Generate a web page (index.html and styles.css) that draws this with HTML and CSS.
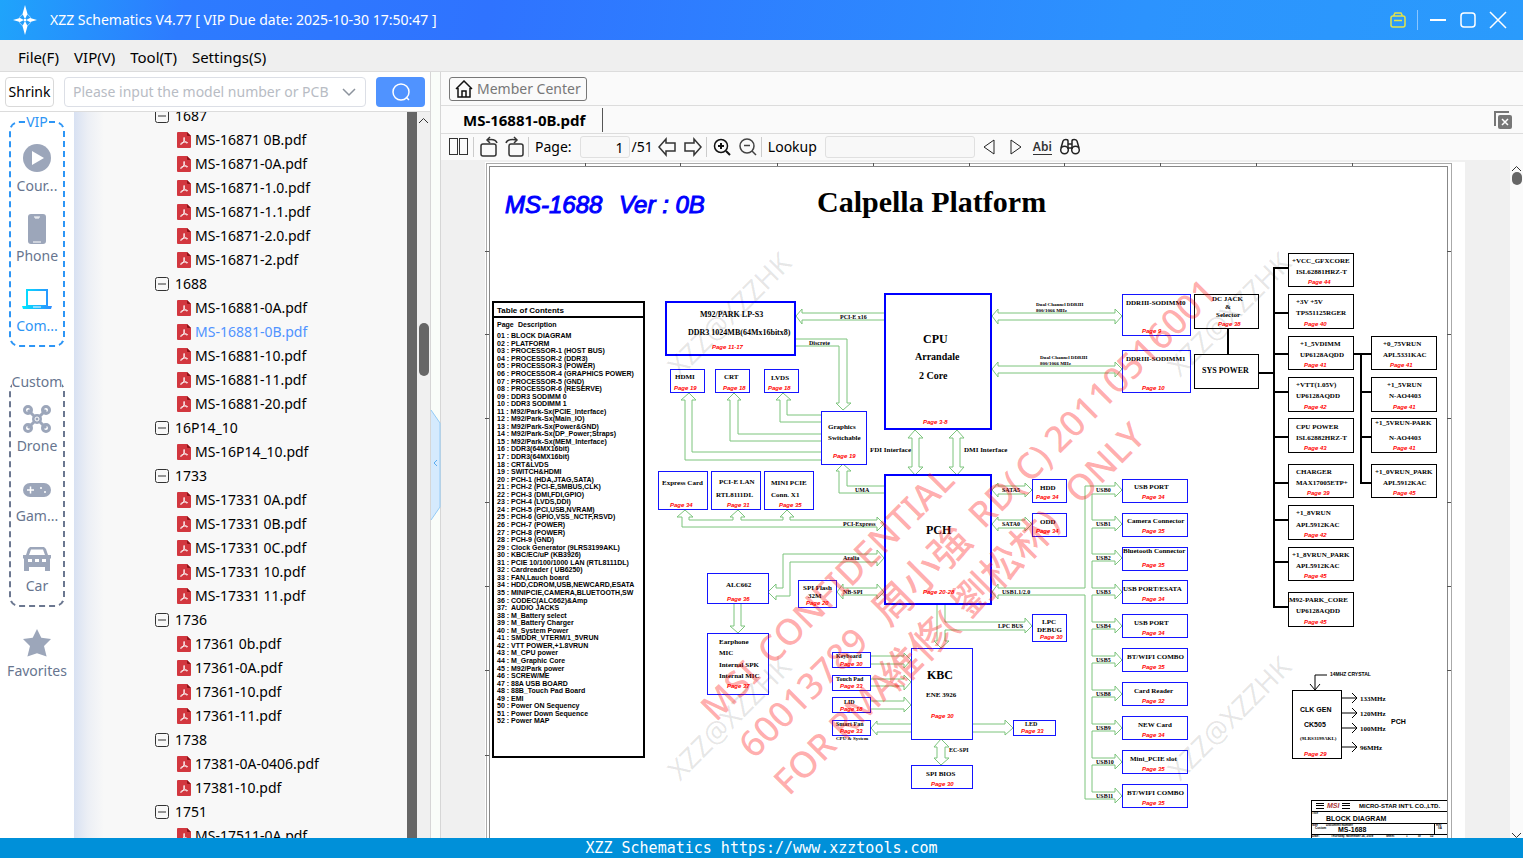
FILE: index.html
```html
<!DOCTYPE html>
<html lang="en">
<head>
    <meta charset="UTF-8">
    <meta name="viewport" content="width=device-width, initial-scale=1.0">
    <title>XZZ Schematics V4.77</title>
    <link rel="stylesheet" href="styles.css">
</head>
<body>

    <!-- shared icons -->
    <svg class="sprite" aria-hidden="true">
        <symbol id="pdf" viewBox="0 0 14 16">
            <path d="M1 0h9l4 4v11a1 1 0 0 1-1 1H1a1 1 0 0 1-1-1V1a1 1 0 0 1 1-1z" fill="#d2373f"/>
            <path d="M10 0l4 4h-3a1 1 0 0 1-1-1z" fill="#8f1218"/>
            <path d="M7 5.500c.8 0 .3 2.500-.6 4.200C5.600 11.300 4 13 3.600 12.300c-.4-.9 2.700-2.300 5-2.300 1.600 0 2.200.6 1.700 1-.8.500-4.200-2.500-3.300-5.500z" fill="none" stroke="#fff" stroke-width="1"/>
        </symbol>
        <symbol id="minus" viewBox="0 0 14 14">
            <rect x="0.500" y="0.500" width="13" height="13" rx="2" fill="none" stroke="#333"/>
            <path d="M3 7h8" stroke="#333"/>
        </symbol>
    </svg>

    <div class="app">
        <header class="titlebar">
            <svg class="logo" viewBox="0 0 24 30">
                <circle cx="12" cy="15" r="6" fill="none" stroke="#9fd4ff" stroke-width="1"/>
                <path d="M12 0l2.500 9-2 4h-1l-2-4zM12 30l2.500-9-2-4h-1l-2 4zM0 15l7-2 3 1.500v1L7 17zM24 15l-7-2-3 1.500v1l3 1.500z" fill="#fff"/>
                <circle cx="12" cy="15" r="1.500" fill="#fff"/>
            </svg>
            <span class="title">XZZ Schematics V4.77 [ VIP Due date: 2025-10-30 17:50:47 ]</span>
            <div class="window-buttons">
                <button class="icon-btn" aria-label="Toolbox"><svg width="16" height="16" viewBox="0 0 16 16" fill="none" stroke="#e3e34a" stroke-width="1.500"><rect x="1" y="4" width="14" height="11" rx="2"/><path d="M4 4V3l1-2h6l1 2v1M4 8.500h8"/></svg></button>
                <span class="title-sep"></span>
                <button class="icon-btn" aria-label="Minimize"><svg width="16" height="16" viewBox="0 0 16 16" stroke="#fff" stroke-width="2"><path d="M0 8h16"/></svg></button>
                <button class="icon-btn" aria-label="Maximize"><svg width="16" height="16" viewBox="0 0 16 16" fill="none" stroke="#fff" stroke-width="1.500"><rect x="1" y="1" width="14" height="14" rx="3"/></svg></button>
                <button class="icon-btn" aria-label="Close"><svg width="16" height="16" viewBox="0 0 16 16" stroke="#fff" stroke-width="1.500"><path d="M0 0l16 16M16 0L0 16"/></svg></button>
            </div>
        </header>

        <nav class="menubar">
            <a href="#">File(F)</a>
            <a href="#">VIP(V)</a>
            <a href="#">Tool(T)</a>
            <a href="#">Settings(S)</a>
        </nav>

        <div class="workspace">
            <aside class="side">
                <form class="search-row">
                    <button type="button" class="shrink">Shrink</button>
                    <div class="combo">
                        <input type="text" aria-label="Model number or PCB" placeholder="Please input the model number or PCB">
                        <button type="button" class="icon-btn" aria-label="Show history"><svg width="14" height="8" viewBox="0 0 14 8" fill="none" stroke="#8c939d" stroke-width="1.500"><path d="M1 1l6 6 6-6"/></svg></button>
                    </div>
                    <button type="button" class="search-btn" aria-label="Search"><svg width="20" height="20" viewBox="0 0 20 20" fill="none" stroke="#fff" stroke-width="1.500"><circle cx="10" cy="10" r="8"/><path d="M15 15l3 3"/></svg></button>
                </form>

                <div class="side-body">
                    <div class="rail">
                        <fieldset class="rail-group vip">
                            <legend>VIP</legend>
                            <button class="rail-item"><svg viewBox="0 0 28 28"><circle cx="14" cy="14" r="14"/><path d="M9 7l12 7-12 7z" fill="#fff"/></svg>Cour...</button>
                            <button class="rail-item"><svg viewBox="0 0 28 28"><rect x="5" y="0" width="18" height="30" rx="3"/><path d="M11 3h6M12 4h4M10 28h8" stroke="#fff" stroke-width="1"/></svg>Phone</button>
                            <button class="rail-item active"><svg viewBox="0 0 28 28"><defs><linearGradient id="lap"><stop offset="0" stop-color="#00e8ff"/><stop offset="1" stop-color="#2f8bff"/></linearGradient></defs><path fill="url(#lap)" fill-rule="evenodd" d="M3 5h22v17h4l-1 3H0l-1-3h4zM5 7v14h18V7z"/><path d="M10 23h8" stroke="#fff" stroke-width="1"/></svg>Com...</button>
                        </fieldset>
                        <fieldset class="rail-group">
                            <legend>Custom</legend>
                            <button class="rail-item"><svg viewBox="0 0 28 28"><g fill="none" stroke="#9ca6ba" stroke-width="3"><circle cx="5" cy="6" r="3.500"/><circle cx="23" cy="6" r="3.500"/><circle cx="5" cy="24" r="3.500"/><circle cx="23" cy="24" r="3.500"/><path d="M5 6l18 18M23 6L5 24"/></g><circle cx="14" cy="15" r="5"/><circle cx="14" cy="15" r="2" fill="none" stroke="#fff"/></svg>Drone</button>
                            <button class="rail-item"><svg viewBox="0 0 28 28"><rect y="9" width="28" height="14" rx="7"/><path d="M4 16h7M7.500 12.500v7" stroke="#fff" stroke-width="1.500"/><circle cx="18" cy="14" r="1" fill="#fff"/><circle cx="22" cy="18" r="1" fill="#fff"/></svg>Gam...</button>
                            <button class="rail-item"><svg viewBox="0 0 28 28"><path transform="translate(0 1)" fill-rule="evenodd" d="M7 2h14l2 2 2 6h3v3l-1 1v12h-5v-4H6v4H1V14l-1-1v-3h3l2-6zM8 4.500L6 10h16l-2-5.500zM5 14v3h4v-3zM12 14v3h4v-3zM19 14v3h4v-3z"/></svg>Car</button>
                        </fieldset>
                        <button class="rail-item favorites"><svg viewBox="0 0 28 28"><path d="M14 0l4.300 8.700 9.700 1.400-7 6.800 2.600 10.600-9.600-3.200-9.600 3.200L7 16.900l-7-6.800 9.700-1.400z"/></svg>Favorites</button>
                    </div>

                    <div class="tree-wrap">
                        <ul class="tree">
                            <li><button class="folder"><svg><use href="#minus"/></svg>1687</button>
                                <ul>
                                    <li><a href="#"><svg><use href="#pdf"/></svg>MS-16871 0B.pdf</a></li>
                                    <li><a href="#"><svg><use href="#pdf"/></svg>MS-16871-0A.pdf</a></li>
                                    <li><a href="#"><svg><use href="#pdf"/></svg>MS-16871-1.0.pdf</a></li>
                                    <li><a href="#"><svg><use href="#pdf"/></svg>MS-16871-1.1.pdf</a></li>
                                    <li><a href="#"><svg><use href="#pdf"/></svg>MS-16871-2.0.pdf</a></li>
                                    <li><a href="#"><svg><use href="#pdf"/></svg>MS-16871-2.pdf</a></li>
                                </ul>
                            </li>
                            <li><button class="folder"><svg><use href="#minus"/></svg>1688</button>
                                <ul>
                                    <li><a href="#"><svg><use href="#pdf"/></svg>MS-16881-0A.pdf</a></li>
                                    <li><a href="#" class="selected"><svg><use href="#pdf"/></svg>MS-16881-0B.pdf</a></li>
                                    <li><a href="#"><svg><use href="#pdf"/></svg>MS-16881-10.pdf</a></li>
                                    <li><a href="#"><svg><use href="#pdf"/></svg>MS-16881-11.pdf</a></li>
                                    <li><a href="#"><svg><use href="#pdf"/></svg>MS-16881-20.pdf</a></li>
                                </ul>
                            </li>
                            <li><button class="folder"><svg><use href="#minus"/></svg>16P14_10</button>
                                <ul>
                                    <li><a href="#"><svg><use href="#pdf"/></svg>MS-16P14_10.pdf</a></li>
                                </ul>
                            </li>
                            <li><button class="folder"><svg><use href="#minus"/></svg>1733</button>
                                <ul>
                                    <li><a href="#"><svg><use href="#pdf"/></svg>MS-17331 0A.pdf</a></li>
                                    <li><a href="#"><svg><use href="#pdf"/></svg>MS-17331 0B.pdf</a></li>
                                    <li><a href="#"><svg><use href="#pdf"/></svg>MS-17331 0C.pdf</a></li>
                                    <li><a href="#"><svg><use href="#pdf"/></svg>MS-17331 10.pdf</a></li>
                                    <li><a href="#"><svg><use href="#pdf"/></svg>MS-17331 11.pdf</a></li>
                                </ul>
                            </li>
                            <li><button class="folder"><svg><use href="#minus"/></svg>1736</button>
                                <ul>
                                    <li><a href="#"><svg><use href="#pdf"/></svg>17361 0b.pdf</a></li>
                                    <li><a href="#"><svg><use href="#pdf"/></svg>17361-0A.pdf</a></li>
                                    <li><a href="#"><svg><use href="#pdf"/></svg>17361-10.pdf</a></li>
                                    <li><a href="#"><svg><use href="#pdf"/></svg>17361-11.pdf</a></li>
                                </ul>
                            </li>
                            <li><button class="folder"><svg><use href="#minus"/></svg>1738</button>
                                <ul>
                                    <li><a href="#"><svg><use href="#pdf"/></svg>17381-0A-0406.pdf</a></li>
                                    <li><a href="#"><svg><use href="#pdf"/></svg>17381-10.pdf</a></li>
                                </ul>
                            </li>
                            <li><button class="folder"><svg><use href="#minus"/></svg>1751</button>
                                <ul>
                                    <li><a href="#"><svg><use href="#pdf"/></svg>MS-17511-0A.pdf</a></li>
                                </ul>
                            </li>
                        </ul>
                    </div>
                    <div class="scrollbar">
                        <svg width="9" height="6" viewBox="0 0 9 6" fill="none" stroke="#333"><path d="M0 5l4.500-4.500L9 5"/></svg>
                        <span class="thumb tree-thumb"></span>
                    </div>
                </div>
            </aside>

            <div class="splitter">
                <button class="icon-btn" aria-label="Collapse side panel"><svg width="10" height="110" viewBox="0 0 10 110"><path d="M0 0l9 13v84l-9 13" fill="#d5eafd" stroke="#93cbf6"/><path d="M6 50l-3 3 3 3" fill="none" stroke="#5cacf0"/></svg></button>
            </div>

            <main class="viewer">
                <div class="center-row">
                    <button class="member"><svg width="18" height="18" viewBox="0 0 18 18" fill="none" stroke="#111" stroke-width="1.500"><path d="M1 9l8-8 8 8M3 8v9h12V8"/><path d="M7 17v-6h4v6"/></svg>Member Center</button>
                </div>
                <div class="tab-row">
                    <a href="#" class="tab">MS-16881-0B.pdf</a>
                    <button class="icon-btn close-all" aria-label="Close all tabs"><svg width="18" height="18" viewBox="0 0 18 18"><path d="M1 15V1h14" fill="none" stroke="#777" stroke-width="2"/><rect x="4" y="4" width="14" height="14" rx="2" fill="#777"/><path d="M8 8l6 6M14 8l-6 6" stroke="#fff" stroke-width="1.500"/></svg></button>
                </div>
                <div class="toolbar">
                    <button class="icon-btn" aria-label="Two pages"><svg width="20" height="18" viewBox="0 0 20 18" fill="none" stroke="#333"><rect x="0.500" y="0.500" width="8" height="16"/><rect x="10.500" y="0.500" width="8" height="16"/></svg></button>
                    <span class="sep"></span>
                    <button class="icon-btn" aria-label="Rotate left"><svg width="18" height="20" viewBox="0 0 18 20" fill="none" stroke="#333" stroke-width="1.500"><rect x="1" y="7" width="15" height="12" rx="2"/><path d="M17 6c-1-3-5-4-10-3M10 0L7 3l3 3"/></svg></button>
                    <button class="icon-btn" aria-label="Rotate right"><svg width="18" height="20" viewBox="0 0 18 20" fill="none" stroke="#333" stroke-width="1.500"><rect x="3" y="7" width="14" height="12" rx="2"/><path d="M0 6c1-3 5-4 11-3M8 0l3 3-3 3"/></svg></button>
                    <span class="sep"></span>
                    <label for="page">Page:</label>
                    <input id="page" class="page-input" type="text" value="1">
                    <span class="page-total">/51</span>
                    <button class="icon-btn" aria-label="Previous page"><svg width="18" height="18" viewBox="0 0 18 18" fill="none" stroke="#333" stroke-width="1.500"><path d="M1 9l7-8v4h9v8H8v4z"/></svg></button>
                    <button class="icon-btn" aria-label="Next page"><svg width="18" height="18" viewBox="0 0 18 18" fill="none" stroke="#333" stroke-width="1.500"><path d="M17 9l-7-8v4H1v8h9v4z"/></svg></button>
                    <span class="sep"></span>
                    <button class="icon-btn" aria-label="Zoom in"><svg width="18" height="18" viewBox="0 0 18 18" fill="none" stroke="#111" stroke-width="2"><circle cx="8" cy="8" r="6.500" stroke-width="1.500"/><path d="M5 8h6M8 5v6M13 13l4 4"/></svg></button>
                    <button class="icon-btn" aria-label="Zoom out"><svg width="18" height="18" viewBox="0 0 18 18" fill="none" stroke="#444" stroke-width="1.500"><circle cx="8" cy="8" r="7"/><path d="M5 7.500h6M13 13l4 4"/></svg></button>
                    <span class="sep"></span>
                    <label for="lookup">Lookup</label>
                    <input id="lookup" class="lookup-input" type="text">
                    <button class="icon-btn" aria-label="Find previous"><svg width="12" height="16" viewBox="0 0 12 16" fill="none" stroke="#222" stroke-width="1"><path d="M11 1v14L1 8z"/></svg></button>
                    <button class="icon-btn next" aria-label="Find next"><svg width="12" height="16" viewBox="0 0 12 16" fill="none" stroke="#222" stroke-width="1"><path d="M1 1v14l10-7z"/></svg></button>
                    <button class="abi">Abi</button>
                    <button class="icon-btn" aria-label="Search in document"><svg width="20" height="16" viewBox="0 0 20 16" fill="none" stroke="#222" stroke-width="1.500"><circle cx="4.500" cy="11" r="3.800"/><circle cx="15.500" cy="11" r="3.800"/><path d="M1 9l2-7c1-2 5-2 5 0v8M19 9l-2-7c-1-2-5-2-5 0v8M8 5h4M8 9h4"/></svg></button>
                </div>

                <div class="doc">
                    <div class="sheet">
                        <svg class="page" viewBox="485 162 980 676">
                            <rect class="paper" x="485" y="162" width="980" height="676"/>

                            <!-- frame -->
                            <g class="frame">
                                <path d="M486 838V163H1451V838" stroke="#aaa"/>
                                <path d="M489 838V166H1447V838" stroke="#888"/>
                                <path d="M585 163v3M680 163v3M777 163v3M873 163v3M969 163v3M1064 163v3M1160 163v3M1256 163v3M1352 163v3M485 251h4M485 334h4M485 418h4M485 502h4M485 586h4M485 670h4M485 755h4M1447 251h4M1447 334h4M1447 418h4M1447 502h4M1447 586h4M1447 670h4" stroke="#555"/>
                            </g>

                            <text class="board" x="505" y="213">MS-1688</text>
                            <text class="board" x="619" y="213">Ver : 0B</text>
                            <text class="heading" x="817" y="212">Calpella Platform</text>

                            <!-- table of contents -->
                            <g class="toc">
                                <rect x="493" y="302" width="151" height="455"/>
                                <path d="M493 317h151"/>
                                <text class="toc-title" x="497" y="313">Table of Contents</text>
                                <text x="497" y="327">Page</text><text x="518" y="327">Description</text>
                                <text x="497" y="338">01 : BLOCK DIAGRAM</text>
                                <text x="497" y="346">02 : PLATFORM</text>
                                <text x="497" y="353">03 : PROCESSOR-1 (HOST BUS)</text>
                                <text x="497" y="361">04 : PROCESSOR-2 (DDR3)</text>
                                <text x="497" y="368">05 : PROCESSOR-3 (POWER)</text>
                                <text x="497" y="376">06 : PROCESSOR-4 (GRAPHICS POWER)</text>
                                <text x="497" y="384">07 : PROCESSOR-5 (GND)</text>
                                <text x="497" y="391">08 : PROCESSOR-6 (RESERVE)</text>
                                <text x="497" y="399">09 : DDR3 SODIMM 0</text>
                                <text x="497" y="406">10 : DDR3 SODIMM 1</text>
                                <text x="497" y="414">11 : M92/Park-Sx(PCIE_Interface)</text>
                                <text x="497" y="421">12 : M92/Park-Sx(Main_IO)</text>
                                <text x="497" y="429">13 : M92/Park-Sx(Power&amp;GND)</text>
                                <text x="497" y="436">14 : M92/Park-Sx(DP_Power;Straps)</text>
                                <text x="497" y="444">15 : M92/Park-Sx(MEM_Interface)</text>
                                <text x="497" y="451">16 : DDR3(64MX16bit)</text>
                                <text x="497" y="459">17 : DDR3(64MX16bit)</text>
                                <text x="497" y="467">18 : CRT&amp;LVDS</text>
                                <text x="497" y="474">19 : SWITCH&amp;HDMI</text>
                                <text x="497" y="482">20 : PCH-1 (HDA,JTAG,SATA)</text>
                                <text x="497" y="489">21 : PCH-2 (PCI-E,SMBUS,CLK)</text>
                                <text x="497" y="497">22 : PCH-3 (DMI,FDI,GPIO)</text>
                                <text x="497" y="504">23 : PCH-4 (LVDS,DDI)</text>
                                <text x="497" y="512">24 : PCH-5 (PCI,USB,NVRAM)</text>
                                <text x="497" y="519">25 : PCH-6 (GPIO,VSS_NCTF,RSVD)</text>
                                <text x="497" y="527">26 : PCH-7 (POWER)</text>
                                <text x="497" y="535">27 : PCH-8 (POWER)</text>
                                <text x="497" y="542">28 : PCH-9 (GND)</text>
                                <text x="497" y="550">29 : Clock Generator (9LRS3199AKL)</text>
                                <text x="497" y="557">30 : KBC/EC/uP (KB3926)</text>
                                <text x="497" y="565">31 : PCIE 10/100/1000 LAN (RTL8111DL)</text>
                                <text x="497" y="572">32 : Cardreader ( UB6250)</text>
                                <text x="497" y="580">33 : FAN,Lauch board</text>
                                <text x="497" y="587">34 : HDD,CDROM,USB,NEWCARD,ESATA</text>
                                <text x="497" y="595">35 : MINIPCIE,CAMERA,BLUETOOTH,SW</text>
                                <text x="497" y="603">36 : CODEC(ALC662)&amp;Amp</text>
                                <text x="497" y="610">37:</text><text x="511" y="610">AUDIO JACKS</text>
                                <text x="497" y="618">38 : M_Battery select</text>
                                <text x="497" y="625">39 : M_Battery Charger</text>
                                <text x="497" y="633">40 : M_System Power</text>
                                <text x="497" y="640">41 : SMDDR_VTERM/1_5VRUN</text>
                                <text x="497" y="648">42 : VTT POWER,+1.8VRUN</text>
                                <text x="497" y="655">43 : M_CPU power</text>
                                <text x="497" y="663">44 : M_Graphic Core</text>
                                <text x="497" y="671">45 : M92/Park power</text>
                                <text x="497" y="678">46 : SCREW/ME</text>
                                <text x="497" y="686">47 : 88A USB BOARD</text>
                                <text x="497" y="693">48 : 88B_Touch Pad Board</text>
                                <text x="497" y="701">49 : EMI</text>
                                <text x="497" y="708">50 : Power ON Sequency</text>
                                <text x="497" y="716">51 : Power Down Sequence</text>
                                <text x="497" y="723">52 : Power MAP</text>
                            </g>

                            <!-- bus arrows -->
                            <g class="bus">
                                <path d="M885 313H802V309L796 316L802 324V320H885"/>
                                <path d="M796 339H847V403H851L843 410L836 403H839V346H796"/>
                                <path d="M821 460H685V400H681L689 393L696 400H692V452H821"/>
                                <path d="M821 441H730V400H727L734 393L741 400H738V434H821"/>
                                <path d="M821 422H780V400H776L783 393L791 400H787V415H821"/>
                                <path d="M885 493H839V471H836L843 464L851 471H847V486H885"/>
                                <path d="M877 520H790V517H794L787 510L780 517H783V520H741V517H745L738 510L730 517H733V520H689V517H693L685 510L677 517H682V527H877V531L884 524L877 517Z"/>
                                <path d="M915 430L923 438H919V467H923L915 475L908 467H912V438H908Z"/>
                                <path d="M957 430L964 438H960V467H964L957 475L949 467H953V438H949Z"/>
                                <path d="M992 316L998 309V313H1115V309L1122 316L1115 324V320H998V324Z"/>
                                <path d="M992 369L998 362V366H1115V362L1122 369L1115 377V373H998V377Z"/>
                                <path d="M992 490L998 483V486H1025V483L1032 490L1025 497V494H998V497Z"/>
                                <path d="M992 524L998 517V520H1025V517L1032 524L1025 531V528H998V531Z"/>
                                <path d="M1085 588H998V584L992 592L998 599V595H1085V799H1115V803L1122 796L1115 788V792H1092V765H1115V769L1122 762L1115 754V758H1092V731H1115V735L1122 728L1115 720V724H1092V697H1115V701L1122 694L1115 686V690H1092V663H1115V667L1122 660L1115 652V656H1092V629H1115V633L1122 626L1115 618V622H1092V595H1115V599L1122 592L1115 584V588H1092V561H1115V565L1122 558L1115 550V554H1092V528H1115V531L1122 524L1115 516V520H1092V494H1115V497L1122 490L1115 482V486H1085Z"/>
                                <path d="M937 604V641H934L941 648L949 641H945V630H1025V633L1032 626L1025 618V622H945V604"/>
                                <path d="M783 554H877V550L884 558L877 566V562H790V596H776V600L768 592L776 584V588H783Z"/>
                                <path d="M837 592L843 584V588H877V584L884 592L877 599V595H843V599Z"/>
                                <path d="M734 603V626H730L738 633L745 626H741V603"/>
                                <path d="M870 656H904V653L911 660L904 668V664H870"/>
                                <path d="M870 679H904V675L911 682L904 690V686H870"/>
                                <path d="M870 701H904V697L911 705L904 712V709H870"/>
                                <path d="M911 724H877V721L871 728L877 735V732H911"/>
                                <path d="M972 724H1005V720L1013 728L1005 735V732H972"/>
                                <path d="M941 739L949 747H945V758H949L941 765L934 758H937V747H934Z"/>
                            </g>

                            <!-- big blocks -->
                            <g class="block thick">
                                <rect x="666" y="302" width="129" height="53"/>
                                <rect x="885" y="294" width="106" height="135"/>
                                <rect x="885" y="475" width="106" height="129"/>
                            </g>

                            <!-- blue blocks -->
                            <g class="block">
                                <rect x="670" y="369" width="34" height="23"/>
                                <rect x="715" y="369" width="34" height="23"/>
                                <rect x="764" y="369" width="34" height="23"/>
                                <rect x="821" y="411" width="45" height="53"/>
                                <rect x="658" y="471" width="49" height="38"/>
                                <rect x="711" y="471" width="49" height="38"/>
                                <rect x="764" y="471" width="49" height="38"/>
                                <rect x="707" y="573" width="61" height="30"/>
                                <rect x="707" y="633" width="61" height="61"/>
                                <rect x="798" y="580" width="38" height="27"/>
                                <rect x="832" y="652" width="38" height="15"/>
                                <rect x="832" y="675" width="38" height="15"/>
                                <rect x="832" y="697" width="38" height="15"/>
                                <rect x="832" y="720" width="38" height="15"/>
                                <rect x="911" y="648" width="61" height="91"/>
                                <rect x="911" y="765" width="61" height="23"/>
                                <rect x="1122" y="294" width="68" height="41"/>
                                <rect x="1122" y="350" width="68" height="42"/>
                                <rect x="1032" y="479" width="34" height="23"/>
                                <rect x="1032" y="513" width="34" height="23"/>
                                <rect x="1032" y="614" width="34" height="27"/>
                                <rect x="1013" y="720" width="42" height="15"/>
                                <rect x="1122" y="479" width="65" height="23"/>
                                <rect x="1122" y="513" width="65" height="23"/>
                                <rect x="1122" y="547" width="65" height="23"/>
                                <rect x="1122" y="580" width="65" height="23"/>
                                <rect x="1122" y="614" width="65" height="23"/>
                                <rect x="1122" y="648" width="65" height="23"/>
                                <rect x="1122" y="682" width="65" height="23"/>
                                <rect x="1122" y="716" width="65" height="23"/>
                                <rect x="1122" y="750" width="65" height="23"/>
                                <rect x="1122" y="784" width="65" height="23"/>
                            </g>

                            <!-- power rails -->
                            <g class="block power">
                                <rect x="1194" y="294" width="64" height="34"/>
                                <rect x="1194" y="354" width="64" height="34"/>
                                <rect x="1288" y="253" width="65" height="33"/>
                                <rect x="1288" y="294" width="65" height="34"/>
                                <rect x="1288" y="336" width="65" height="33"/>
                                <rect x="1288" y="377" width="65" height="34"/>
                                <rect x="1288" y="418" width="65" height="34"/>
                                <rect x="1288" y="464" width="65" height="33"/>
                                <rect x="1288" y="505" width="65" height="34"/>
                                <rect x="1288" y="547" width="65" height="33"/>
                                <rect x="1288" y="592" width="65" height="34"/>
                                <rect x="1371" y="336" width="65" height="33"/>
                                <rect x="1371" y="377" width="65" height="34"/>
                                <rect x="1371" y="418" width="65" height="34"/>
                                <rect x="1371" y="464" width="65" height="33"/>
                                <rect x="1292" y="690" width="49" height="68"/>
                            </g>
                            <path class="rail-line" d="M1228 328V354M1258 373H1274M1288 268H1274V607H1288M1274 313H1288M1274 354H1288M1274 392H1288M1274 437H1288M1274 483H1288M1274 520H1288M1274 562H1288M1353 354H1371M1361 354V483H1371M1361 392H1371M1361 437H1371"/>

                            <!-- bus names -->
                            <g class="tiny">
                                <text x="840" y="319">PCI-E x16</text>
                                <text x="809" y="345">Discrete</text>
                                <text x="855" y="492">UMA</text>
                                <text x="843" y="526">PCI-Express</text>
                                <text x="843" y="560">Azalia</text>
                                <text x="843" y="594">NB-SPI</text>
                                <text x="1002" y="492">SATA5</text>
                                <text x="1002" y="526">SATA0</text>
                                <text x="1002" y="594">USB1.1/2.0</text>
                                <text x="998" y="628">LPC BUS</text>
                                <text x="949" y="752">EC-SPI</text>
                                <text x="1096" y="492">USB0</text>
                                <text x="1096" y="526">USB1</text>
                                <text x="1096" y="560">USB2</text>
                                <text x="1096" y="594">USB3</text>
                                <text x="1096" y="628">USB4</text>
                                <text x="1096" y="662">USB5</text>
                                <text x="1096" y="696">USB8</text>
                                <text x="1096" y="730">USB9</text>
                                <text x="1096" y="764">USB10</text>
                                <text x="1096" y="798">USB11</text>
                                <text x="836" y="658">Keyboard</text>
                                <text x="836" y="681">Touch Pad</text>
                                <text x="844" y="704">LID</text>
                                <text x="836" y="726">Smart Fan</text>
                                <text x="1025" y="726">LED</text>
                            </g>
                            <g class="micro">
                                <text x="1036" y="306">Dual Channel DDRIII</text>
                                <text x="1036" y="312">800/1066 MHz</text>
                                <text x="1040" y="359">Dual Channel DDRIII</text>
                                <text x="1040" y="365">800/1066 MHz</text>
                                <text x="836" y="740">CPU &amp; System</text>
                                <text x="1300" y="740">(9LRS3199AKL)</text>
                            </g>

                            <!-- block names -->
                            <g class="name big">
                                <text x="923" y="343">CPU</text>
                                <text x="926" y="534">PCH</text>
                                <text x="927" y="679">KBC</text>
                            </g>
                            <g class="name mid">
                                <text x="915" y="360">Arrandale</text>
                                <text x="919" y="379">2 Core</text>
                            </g>
                            <g class="name wide">
                                <text x="700" y="317">M92/PARK LP-S3</text>
                                <text x="688" y="335">DDR3 1024MB(64Mx16bitx8)</text>
                                <text x="1202" y="373">SYS POWER</text>
                            </g>
                            <g class="name">
                                <text x="675" y="379">HDMI</text>
                                <text x="724" y="379">CRT</text>
                                <text x="771" y="380">LVDS</text>
                                <text x="828" y="429">Graphics</text>
                                <text x="828" y="440">Switchable</text>
                                <text x="870" y="452">FDI Interface</text>
                                <text x="964" y="452">DMI Interface</text>
                                <text x="662" y="485">Express Card</text>
                                <text x="719" y="484">PCI-E LAN</text>
                                <text x="716" y="497">RTL8111DL</text>
                                <text x="771" y="485">MINI PCIE</text>
                                <text x="771" y="497">Conn. X1</text>
                                <text x="726" y="587">ALC662</text>
                                <text x="803" y="590">SPI Flash</text>
                                <text x="808" y="598">32M</text>
                                <text x="719" y="644">Earphone</text>
                                <text x="719" y="655">MIC</text>
                                <text x="719" y="667">Internal SPK</text>
                                <text x="719" y="678">Internal MIC</text>
                                <text x="926" y="697">ENE 3926</text>
                                <text x="926" y="776">SPI BIOS</text>
                                <text x="1126" y="305">DDRIII-SODIMM0</text>
                                <text x="1126" y="361">DDRIII-SODIMM1</text>
                                <text x="1212" y="301">DC JACK</text>
                                <text x="1225" y="309">&amp;</text>
                                <text x="1216" y="317">Selector</text>
                                <text x="1040" y="490">HDD</text>
                                <text x="1040" y="524">ODD</text>
                                <text x="1042" y="624">LPC</text>
                                <text x="1037" y="632">DEBUG</text>
                                <text x="1134" y="489">USB PORT</text>
                                <text x="1127" y="523">Camera Connector</text>
                                <text x="1123" y="553">Bluetooth Connector</text>
                                <text x="1123" y="591">USB PORT/ESATA</text>
                                <text x="1134" y="625">USB PORT</text>
                                <text x="1127" y="659">BT/WIFI COMBO</text>
                                <text x="1134" y="693">Card Reader</text>
                                <text x="1138" y="727">NEW Card</text>
                                <text x="1130" y="761">Mini_PCIE slot</text>
                                <text x="1127" y="795">BT/WIFI COMBO</text>
                                <text x="1292" y="263">+VCC_GFXCORE</text>
                                <text x="1296" y="274">ISL62881HRZ-T</text>
                                <text x="1296" y="304">+3V +5V</text>
                                <text x="1296" y="315">TPS51125RGER</text>
                                <text x="1300" y="346">+1_5VDIMM</text>
                                <text x="1300" y="357">UP6128AQDD</text>
                                <text x="1296" y="387">+VTT(1.05V)</text>
                                <text x="1296" y="398">UP6128AQDD</text>
                                <text x="1296" y="429">CPU POWER</text>
                                <text x="1296" y="440">ISL62882HRZ-T</text>
                                <text x="1296" y="474">CHARGER</text>
                                <text x="1296" y="485">MAX17005ETP+</text>
                                <text x="1296" y="515">+1_8VRUN</text>
                                <text x="1296" y="527">APL5912KAC</text>
                                <text x="1292" y="557">+1_8VRUN_PARK</text>
                                <text x="1296" y="568">APL5912KAC</text>
                                <text x="1289" y="602">M92-PARK_CORE</text>
                                <text x="1296" y="613">UP6128AQDD</text>
                                <text x="1383" y="346">+0_75VRUN</text>
                                <text x="1383" y="357">APL5331KAC</text>
                                <text x="1387" y="387">+1_5VRUN</text>
                                <text x="1389" y="398">N-AO4403</text>
                                <text x="1375" y="425">+1_5VRUN-PARK</text>
                                <text x="1389" y="440">N-AO4403</text>
                                <text x="1375" y="474">+1_0VRUN_PARK</text>
                                <text x="1383" y="485">APL5912KAC</text>
                                <text x="1360" y="701">133MHz</text>
                                <text x="1360" y="716">120MHz</text>
                                <text x="1360" y="731">100MHz</text>
                                <text x="1360" y="750">96MHz</text>
                            </g>

                            <!-- page references -->
                            <g class="ref">
                                <text x="712" y="349">Page 11-17</text>
                                <text x="674" y="390">Page 19</text>
                                <text x="723" y="390">Page 18</text>
                                <text x="768" y="390">Page 18</text>
                                <text x="833" y="458">Page 19</text>
                                <text x="923" y="424">Page 3-8</text>
                                <text x="670" y="507">Page 34</text>
                                <text x="727" y="507">Page 31</text>
                                <text x="779" y="507">Page 35</text>
                                <text x="923" y="594">Page 20-28</text>
                                <text x="727" y="601">Page 36</text>
                                <text x="806" y="605">Page 20</text>
                                <text x="727" y="688">Page 37</text>
                                <text x="840" y="666">Page 30</text>
                                <text x="840" y="688">Page 33</text>
                                <text x="840" y="711">Page 18</text>
                                <text x="840" y="733">Page 33</text>
                                <text x="931" y="718">Page 30</text>
                                <text x="931" y="786">Page 30</text>
                                <text x="1142" y="333">Page 9</text>
                                <text x="1142" y="390">Page 10</text>
                                <text x="1218" y="326">Page 38</text>
                                <text x="1036" y="499">Page 34</text>
                                <text x="1036" y="533">Page 34</text>
                                <text x="1040" y="639">Page 30</text>
                                <text x="1021" y="733">Page 33</text>
                                <text x="1142" y="499">Page 34</text>
                                <text x="1142" y="533">Page 35</text>
                                <text x="1142" y="567">Page 35</text>
                                <text x="1142" y="601">Page 34</text>
                                <text x="1142" y="635">Page 34</text>
                                <text x="1142" y="669">Page 35</text>
                                <text x="1142" y="703">Page 32</text>
                                <text x="1142" y="737">Page 34</text>
                                <text x="1142" y="771">Page 35</text>
                                <text x="1142" y="805">Page 35</text>
                                <text x="1308" y="284">Page 44</text>
                                <text x="1304" y="326">Page 40</text>
                                <text x="1304" y="367">Page 41</text>
                                <text x="1304" y="409">Page 42</text>
                                <text x="1304" y="450">Page 43</text>
                                <text x="1307" y="495">Page 39</text>
                                <text x="1304" y="537">Page 42</text>
                                <text x="1304" y="578">Page 45</text>
                                <text x="1304" y="624">Page 45</text>
                                <text x="1390" y="367">Page 41</text>
                                <text x="1393" y="409">Page 41</text>
                                <text x="1393" y="450">Page 41</text>
                                <text x="1393" y="495">Page 45</text>
                                <text x="1304" y="756">Page 29</text>
                            </g>

                            <!-- clock generator -->
                            <path class="clock" d="M1327 675H1315V689M1310 684L1315 690L1320 684M1341 698H1357M1352 693L1357 698L1352 703M1341 713H1357M1352 708L1357 713L1352 718M1341 728H1357M1352 723L1357 728L1352 733M1341 747H1357M1352 742L1357 747L1352 752"/>
                            <g class="sans">
                                <text x="1300" y="712">CLK GEN</text>
                                <text x="1304" y="727">CK505</text>
                                <text x="1391" y="724">PCH</text>
                                <text class="s5" x="1330" y="676">14MHZ CRYSTAL</text>
                            </g>

                            <!-- title block -->
                            <g class="stamp">
                                <path d="M1311 838V800H1447M1311 811H1447M1311 823H1447M1311 834H1447M1434 823V834"/>
                                <path d="M1316 803h8M1316 805h8M1316 808h8M1342 803h8M1342 805h8M1342 808h8" stroke="#999"/>
                                <text class="msi" x="1327" y="808">MSI</text>
                                <text class="s6" x="1359" y="808">MICRO-STAR INT'L CO.,LTD.</text>
                                <text class="s7" x="1326" y="821">BLOCK DIAGRAM</text>
                                <text class="s7" x="1338" y="832">MS-1688</text>
                                <text x="1312" y="814">Title</text>
                                <text x="1312" y="826">Size</text>
                                <text x="1315" y="829">Custom</text>
                                <text x="1326" y="826">Document Number</text>
                                <text x="1436" y="826">Rev</text>
                                <text x="1438" y="829">0A</text>
                                <text x="1312" y="837">Date:</text>
                                <text x="1331" y="837">Thursday, November 26, 2009</text>
                                <text x="1386" y="837">Sheet</text>
                                <text x="1406" y="837">1</text>
                                <text x="1418" y="837">of</text>
                                <text x="1430" y="837">52</text>
                            </g>

                            <!-- watermarks -->
                            <g class="mark grey">
                                <text transform="translate(680 378) rotate(-45)">XZZ@XZZHK</text>
                                <text transform="translate(1180 378) rotate(-45)">XZZ@XZZHK</text>
                                <text transform="translate(680 782) rotate(-45)">XZZ@XZZHK</text>
                                <text transform="translate(1180 782) rotate(-45)">XZZ@XZZHK</text>
                            </g>
                            <g class="mark red">
                                <g transform="translate(716 723) rotate(-45)">
                                    <text x="0">MSI</text><text x="80">CONFIDENTIAL</text>
                                </g>
                                <g transform="translate(754 760) rotate(-45)">
                                    <text x="0">60013789</text><text class="cjk" x="189" y="2">周小強</text><text x="325">RD(</text><text x="390">C)</text><text x="432">20110516001</text>
                                </g>
                                <g transform="translate(789 797) rotate(-45)">
                                    <text x="0">FOR</text><text x="78">RMA</text><text class="cjk" x="151" y="2">維修</text><text x="230">(</text><text class="cjk" x="253" y="2">劉松林</text><text x="374">)</text><text x="412">ONLY</text>
                                </g>
                            </g>
                        </svg>
                    </div>
                    <div class="scrollbar doc-scroll">
                        <svg width="9" height="6" viewBox="0 0 9 6" fill="none" stroke="#333"><path d="M0 5l4.500-4.500L9 5"/></svg>
                        <span class="thumb doc-thumb"></span>
                        <svg class="down" width="9" height="6" viewBox="0 0 9 6" fill="none" stroke="#333"><path d="M0 1l4.500 4.500L9 1"/></svg>
                    </div>
                </div>
            </main>
        </div>

        <footer class="status">XZZ Schematics https://www.xzztools.com</footer>
    </div>

</body>
</html>
```
FILE: styles.css
```css
:root {
    --line: #dcdcdc;
    --accent: #5093ff;
    --vip: #2d95f5;
    --icon-grey: #9ca6ba;
    --panel: #fafafa;
}

* {
    margin: 0;
    padding: 0;
    box-sizing: border-box;
}

body {
    font-family: "Noto Sans", "Open Sans", sans-serif;
    font-size: 14px;
    line-height: 20px;
    color: #000;
    background-color: #f0f0f0;
}

button,
input {
    font: inherit;
    color: inherit;
    border: none;
    background: none;
}

button {
    cursor: pointer;
}

a {
    color: inherit;
    text-decoration: none;
}

ul {
    list-style: none;
}

.sprite {
    position: absolute;
    width: 0;
    height: 0;
}

.app {
    display: flex;
    flex-direction: column;
    height: 100vh;
    overflow: hidden;
}

.icon-btn {
    display: flex;
    align-items: center;
    justify-content: center;
    flex-shrink: 0;
}

.icon-btn svg {
    overflow: visible;
}

/* title bar */
.titlebar {
    display: flex;
    align-items: center;
    flex-shrink: 0;
    height: 40px;
    padding: 0 17px 0 13px;
    color: #fff;
    background: linear-gradient(100deg, #1fa4fb 0, #2d7bff 12%, #2f73ff 32%, #2c93fe 75%, #2a9bfc 100%);
}

.logo {
    width: 24px;
    height: 30px;
    margin-right: 13px;
}

.window-buttons {
    display: flex;
    align-items: center;
    gap: 14px;
    margin-left: auto;
}

.title-sep {
    width: 1px;
    height: 20px;
    margin: 0 -2px 0 -3px;
    background-color: #8ac6ff;
}

/* menu */
.menubar {
    display: flex;
    flex-shrink: 0;
    align-items: center;
    gap: 15px;
    height: 32px;
    padding: 2px 18px 0;
    font-size: 15px;
    background-color: #efefef;
    border-bottom: 1px solid var(--line);
}

.workspace {
    display: flex;
    flex: 1;
    min-height: 0;
}

/* left side */
.side {
    display: flex;
    flex-direction: column;
    width: 431px;
    flex-shrink: 0;
    background-color: #fff;
    border-right: 1px solid #d6d6d6;
}

.search-row {
    display: flex;
    align-items: center;
    gap: 10px;
    flex-shrink: 0;
    height: 40px;
    padding: 0 5px;
    border-bottom: 1px solid var(--line);
}

.shrink {
    width: 49px;
    height: 30px;
    border: 1px solid #d9d9d9;
    border-radius: 4px;
}

.combo {
    display: flex;
    align-items: center;
    flex: 1;
    min-width: 0;
    height: 30px;
    padding: 0 9px 0 8px;
    border: 1px solid #dcdfe6;
    border-radius: 4px;
}

.combo input {
    flex: 1;
    min-width: 0;
    margin-right: 8px;
    outline: none;
}

.combo input::placeholder {
    color: #b8bcc4;
}

.search-btn {
    display: flex;
    align-items: center;
    justify-content: center;
    width: 49px;
    height: 30px;
    border-radius: 4px;
    background-color: var(--accent);
}

.side-body {
    display: flex;
    flex: 1;
    min-height: 0;
}

.rail {
    width: 74px;
    flex-shrink: 0;
    color: #67758f;
}

.rail-group {
    display: flex;
    flex-direction: column;
    align-items: center;
    gap: 18px;
    min-width: 0;
    margin: 0 9px 22px;
    padding: 12px 0 9px;
    border: 2px dashed #6b7790;
    border-radius: 10px;
}

.rail-group legend {
    margin: 0 auto;
}

.rail-group.vip {
    margin-bottom: 25px;
    border-color: var(--vip);
}

.rail-group.vip legend,
.rail-item.active {
    color: var(--vip);
}

.rail-item {
    display: flex;
    flex-direction: column;
    align-items: center;
    gap: 4px;
}

.rail-item svg {
    width: 28px;
    height: 28px;
    fill: var(--icon-grey);
    overflow: visible;
}

.rail-item.favorites {
    width: 100%;
}

.tree-wrap {
    flex: 1;
    min-width: 0;
    overflow: hidden;
    background: linear-gradient(90deg, #d8e1f2 0, #eceff5 14px, #f8f8f8 30px);
    border-right: 10px solid #666;
}

/* list is scrolled part way into the first row */
.tree {
    margin-top: -8px;
    padding-left: 81px;
}

.tree ul {
    padding-left: 22px;
}

.tree a,
.folder {
    display: flex;
    align-items: center;
    height: 24px;
    white-space: nowrap;
}

.tree svg {
    width: 14px;
    height: 16px;
    margin-right: 4px;
    flex-shrink: 0;
}

.tree .folder svg {
    height: 14px;
    margin-right: 6px;
}

.tree .selected {
    color: var(--accent);
}

.scrollbar {
    position: relative;
    display: flex;
    flex-direction: column;
    align-items: center;
    width: 13px;
    flex-shrink: 0;
    padding: 6px 0 0;
    background-color: #f0f0f0;
}

.thumb {
    width: 10px;
    border-radius: 5px;
    background-color: #666;
}

.tree-thumb {
    position: absolute;
    top: 29%;
    height: 53px;
}

/* splitter */
.splitter {
    display: flex;
    align-items: center;
    width: 10px;
    flex-shrink: 0;
    padding-top: 20px;
    background-color: #f9fdf9;
    border-right: 1px solid #d6d6d6;
}

/* viewer */
.viewer {
    display: flex;
    flex-direction: column;
    flex: 1;
    min-width: 0;
    background-color: var(--panel);
}

.center-row {
    display: flex;
    align-items: center;
    flex-shrink: 0;
    height: 34px;
    padding: 0 8px;
    border-bottom: 1px solid var(--line);
}

.member {
    display: flex;
    align-items: center;
    gap: 4px;
    height: 24px;
    padding: 0 5px;
    color: #777;
    border: 1px solid #777;
    border-radius: 3px;
}

.tab-row {
    display: flex;
    align-items: center;
    justify-content: space-between;
    flex-shrink: 0;
    height: 28px;
    padding-right: 11px;
    border-bottom: 1px solid var(--line);
}

.tab {
    padding: 2px 17px 2px 22px;
    font-size: 15px;
    font-weight: 700;
    border-right: 1px solid #555;
}

.toolbar {
    display: flex;
    align-items: center;
    gap: 8px;
    flex-shrink: 0;
    height: 26px;
    padding-left: 8px;
}

.sep {
    width: 1px;
    height: 20px;
    margin: 0 -2px 0 -4px;
    background-color: #ccc;
}

.toolbar input {
    height: 22px;
    border: 1px solid #e0e0e0;
    border-radius: 3px;
    background-color: #f8f8f8;
}

.page-input {
    width: 50px;
    padding-right: 5px;
    text-align: right;
}

.page-total {
    margin: 0 -3px 0 -6px;
}

.lookup-input {
    width: 150px;
}

.toolbar .next {
    margin: 0 3px 0 7px;
}

.abi {
    height: 16px;
    font-size: 12px;
    font-weight: 600;
    line-height: 14px;
    color: #333;
    border-bottom: 1px solid #333;
}

.doc {
    display: flex;
    flex: 1;
    min-height: 0;
    background-color: #f0f0f0;
}

.sheet {
    flex: 1;
    min-width: 0;
    overflow: hidden;
    padding: 2px 45px 0 44px;
}

.doc-scroll {
    background-color: var(--panel);
}

.doc-thumb {
    height: 13px;
}

.doc-scroll .down {
    margin-top: auto;
}

/* schematic page */
.page {
    display: block;
    width: 100%;
    font-family: "Liberation Sans", Arial, sans-serif;
}

.paper {
    fill: #fff;
}

.frame path,
.block rect {
    fill: none;
    shape-rendering: crispEdges;
}

.board {
    font-size: 24px;
    font-style: italic;
    fill: #00f;
    stroke: #00f;
}

.heading {
    font: 700 30px "Liberation Serif", serif;
}

.toc {
    font-size: 7px;
    font-weight: 700;
}

.toc-title {
    font-size: 8px;
}

.toc rect,
.toc path {
    fill: none;
    stroke: #000;
    stroke-width: 2;
}

.bus path {
    fill: none;
    stroke: #7cc47c;
}

.block rect {
    stroke: #1414ff;
}

.block.thick rect {
    stroke: #00f;
    stroke-width: 2;
}

.block.power rect {
    stroke: #000;
}

.rail-line {
    fill: none;
    stroke: #000;
    stroke-width: 2;
}

.clock {
    fill: none;
    stroke: #000;
}

.name,
.tiny,
.micro {
    font-family: "Liberation Serif", serif;
    font-size: 7px;
    font-weight: 700;
}

.name.big {
    font-size: 12px;
}

.name.mid {
    font-size: 10px;
}

.name.wide {
    font-size: 8px;
}

.tiny {
    font-size: 6px;
}

.micro {
    font-size: 5px;
}

.ref {
    font-size: 6px;
    font-weight: 700;
    font-style: italic;
    fill: #f00;
}

.sans {
    font-size: 7px;
    font-weight: 700;
}

.stamp {
    font-size: 3px;
    font-weight: 700;
}

.stamp path {
    fill: none;
    stroke: #000;
    shape-rendering: crispEdges;
}

.s5 {
    font-size: 5px;
}

.s6 {
    font-size: 6px;
}

.s7 {
    font-size: 7px;
}

.msi {
    font-size: 7px;
    font-style: italic;
    fill: #a33;
}

.mark {
    font-family: "Noto Sans", sans-serif;
}

.grey {
    font-size: 28px;
    fill: #000;
    fill-opacity: 0.1;
}

.red {
    font-size: 36px;
    font-weight: 500;
    fill: #f00;
    fill-opacity: 0.32;
}

.cjk {
    font-family: "Noto Sans CJK TC", sans-serif;
    font-size: 40px;
}

/* status bar */
.status {
    flex-shrink: 0;
    height: 20px;
    font-family: "DejaVu Sans Mono", monospace;
    font-size: 15px;
    text-align: center;
    color: #fff;
    background-color: #0090d9;
}
```
